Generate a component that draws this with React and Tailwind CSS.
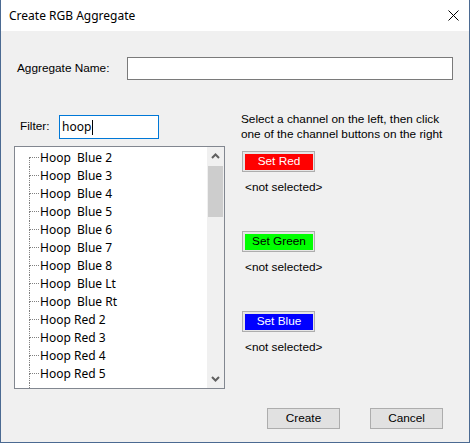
import React from "react";

const items = [
  "Hoop  Blue 2",
  "Hoop  Blue 3",
  "Hoop  Blue 4",
  "Hoop  Blue 5",
  "Hoop  Blue 6",
  "Hoop  Blue 7",
  "Hoop  Blue 8",
  "Hoop  Blue Lt",
  "Hoop  Blue Rt",
  "Hoop Red 2",
  "Hoop Red 3",
  "Hoop Red 4",
  "Hoop Red 5",
];

const ui = { fontFamily: '"Liberation Sans", Arial, sans-serif' };
const segoe = { fontFamily: '"Noto Sans", "Open Sans", sans-serif' };

function Chevron({ up }) {
  return (
    <svg width="9" height="6" viewBox="0 0 9 6">
      <path
        d={up ? "M1 5 L4.5 1.5 L8 5" : "M1 1 L4.5 4.5 L8 1"}
        fill="none"
        stroke="#606060"
        strokeWidth="2"
      />
    </svg>
  );
}

function ColorButton({ label, bg, fg }) {
  return (
    <div className="ml-[1px] w-[73px] h-[21px] border border-[#adadad] bg-[#e5e5e5] pl-[2px] pt-[2px] pr-[1px] pb-[1px] flex">
      <div
        className={`flex-1 flex items-center justify-center text-[11.8px] leading-none ${bg} ${fg}`}
        style={ui}
      >
        {label}
      </div>
    </div>
  );
}

function NotSelected() {
  return (
    <div className="ml-[4px] mt-[8px] text-[11.8px] leading-[15px] text-black" style={ui}>
      &lt;not selected&gt;
    </div>
  );
}

export default function App() {
  return (
    <div className="w-[470px] h-[443px] border-x border-b border-[#4b6a92] flex flex-col bg-[#f0f0f0] overflow-hidden">
      {/* Title bar */}
      <div className="h-[31px] bg-white flex items-center justify-between pl-[8px] pr-[10px] shrink-0">
        <span className="text-[12px] text-black" style={segoe}>
          Create RGB Aggregate
        </span>
        <svg width="11" height="11" viewBox="0 0 11 11">
          <path d="M0.5 0.5 L10.5 10.5 M10.5 0.5 L0.5 10.5" stroke="#000" strokeWidth="1" />
        </svg>
      </div>

      {/* Body */}
      <div className="flex-1 flex flex-col">
        {/* Name row */}
        <div className="mt-[26px] pl-[16px] flex items-center h-[23px]">
          <div className="w-[110px] text-[11.8px] text-black" style={ui}>
            Aggregate Name:
          </div>
          <div className="w-[326px] h-[23px] bg-white border border-[#7a7a7a]" />
        </div>

        {/* Main area */}
        <div className="mt-[32px] flex pl-[13px]">
          {/* Left column */}
          <div className="w-[211px] pt-[3px] flex flex-col">
            <div className="flex items-center h-[24px] pl-[6px]">
              <div className="w-[39px] text-[11.8px] text-black" style={ui}>
                Filter:
              </div>
              <div className="w-[100px] h-[24px] bg-white border border-[#0078d7] flex items-center pl-[2px]">
                <span className="text-[12px] text-black leading-none" style={segoe}>
                  hoop
                </span>
                <span className="w-[1px] h-[15px] bg-black ml-[1px]" />
              </div>
            </div>

            {/* List */}
            <div className="mt-[7px] h-[243px] bg-white border border-[#828790] flex overflow-hidden">
              <div className="flex-1 pt-[2px] pl-[14px] flex flex-col overflow-hidden">
                {items.map((t, i) => (
                  <div key={t} className="h-[18px] flex shrink-0">
                    <div className="w-[10px] h-[18px] grid grid-rows-[9px_9px]">
                      <div
                        className={`border-b border-dotted border-[#808080] ${
                          i === 0 ? "" : "border-l"
                        }`}
                      />
                      <div className="border-l border-dotted border-[#808080]" />
                    </div>
                    <div
                      className="ml-[1px] text-[12px] leading-[18px] text-black whitespace-pre"
                      style={segoe}
                    >
                      {t}
                    </div>
                  </div>
                ))}
                <div className="flex-1 w-[10px] border-l border-dotted border-[#808080]" />
              </div>
              {/* Scrollbar */}
              <div className="w-[17px] bg-[#f0f0f0] flex flex-col">
                <div className="h-[18px] flex items-center justify-center">
                  <Chevron up />
                </div>
                <div className="mt-[1px] mx-[1px] h-[51px] bg-[#cdcdcd]" />
                <div className="flex-1" />
                <div className="h-[18px] flex items-center justify-center">
                  <Chevron />
                </div>
              </div>
            </div>
          </div>

          {/* Right column */}
          <div className="ml-[16px] flex flex-col">
            <div className="text-[11.8px] leading-[15px] text-black whitespace-nowrap" style={ui}>
              Select a channel on the left, then click
              <br />
              one of the channel buttons on the right
            </div>
            <div className="mt-[9px]">
              <ColorButton label="Set Red" bg="bg-[#ff0000]" fg="text-white" />
            </div>
            <NotSelected />
            <div className="mt-[36px]">
              <ColorButton label="Set Green" bg="bg-[#00ff00]" fg="text-black" />
            </div>
            <NotSelected />
            <div className="mt-[36px]">
              <ColorButton label="Set Blue" bg="bg-[#0000ff]" fg="text-white" />
            </div>
            <NotSelected />
          </div>
        </div>

        {/* Bottom buttons */}
        <div className="mt-auto mb-[13px] flex justify-end gap-[30px] pr-[26px]">
          <div
            className="w-[73px] h-[21px] bg-[#e1e1e1] border border-[#adadad] flex items-center justify-center text-[11.8px] text-black"
            style={ui}
          >
            Create
          </div>
          <div
            className="w-[73px] h-[21px] bg-[#e1e1e1] border border-[#adadad] flex items-center justify-center text-[11.8px] text-black"
            style={ui}
          >
            Cancel
          </div>
        </div>
      </div>
    </div>
  );
}
